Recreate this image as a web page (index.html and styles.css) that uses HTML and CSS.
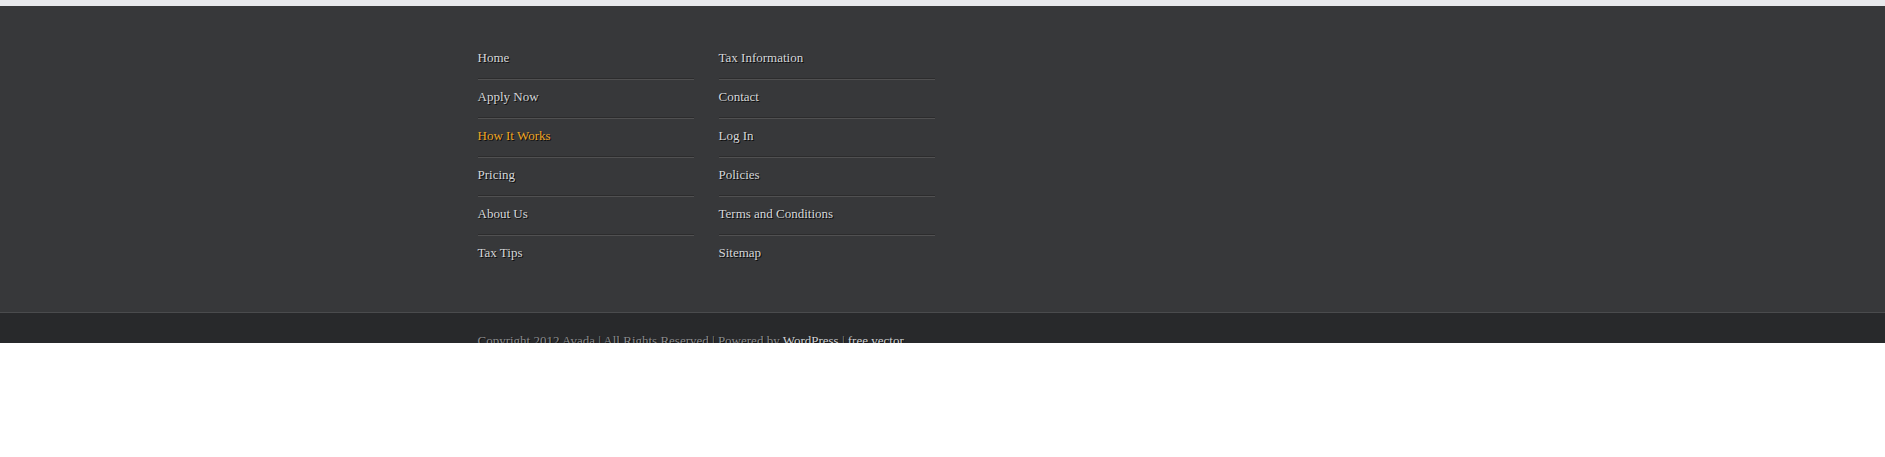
FILE: index.html
```html
<!DOCTYPE html>
<html>
<head>
<meta charset="utf-8">
<link rel="stylesheet" href="styles.css">
</head>
<body>
<div class="page">
  <div class="topband"></div>
  <footer class="footer">
    <div class="container cols">
      <ul class="menu">
        <li><a href="#">Home</a></li>
        <li><a href="#">Apply Now</a></li>
        <li><a href="#" class="active">How It Works</a></li>
        <li><a href="#">Pricing</a></li>
        <li><a href="#">About Us</a></li>
        <li><a href="#">Tax Tips</a></li>
      </ul>
      <ul class="menu">
        <li><a href="#">Tax Information</a></li>
        <li><a href="#">Contact</a></li>
        <li><a href="#">Log In</a></li>
        <li><a href="#">Policies</a></li>
        <li><a href="#">Terms and Conditions</a></li>
        <li><a href="#">Sitemap</a></li>
      </ul>
    </div>
  </footer>
  <div class="copyright">
    <div class="container">Copyright 2012 Avada | All Rights Reserved | Powered by <a href="#">WordPress</a> | <a href="#">free vector</a></div>
  </div>
</div>
</body>
</html>
```

FILE: styles.css
```css
html, body {
  margin: 0;
  padding: 0;
  background: #ffffff;
}
.page {
  height: 343px;
  overflow: hidden;
  font-family: "Liberation Serif", "Times New Roman", serif;
  font-size: 13px;
}
.topband {
  height: 6px;
  background: #e8e9ec;
}
.footer {
  background: #37383a;
  padding: 34px 0 39px;
  border-bottom: 1px solid #4a4b4d;
}
.container {
  width: 930px;
  margin: 0 auto;
}
.cols {
  display: flex;
  gap: 25px;
}
.menu {
  list-style: none;
  margin: 0;
  padding: 0;
  width: 216px;
}
.menu li {
  padding: 9px 0 11px;
  line-height: 18px;
  border-bottom: 1px solid #2c2c2d;
  box-shadow: 0 1px 0 #505051;
}
.menu li:last-child {
  border-bottom: none;
  box-shadow: none;
}
.menu a {
  color: #d4d6d8;
  text-decoration: none;
  text-shadow: 1px 1px 0 #0a0a0a;
}
.menu a.active {
  color: #eda626;
}
.copyright {
  background: #28292b;
  padding-top: 19px;
  line-height: 18px;
  color: #8a8b8d;
  text-shadow: 1px 1px 0 #111;
}
.copyright a {
  color: #d0d2d4;
  text-decoration: none;
}
```
